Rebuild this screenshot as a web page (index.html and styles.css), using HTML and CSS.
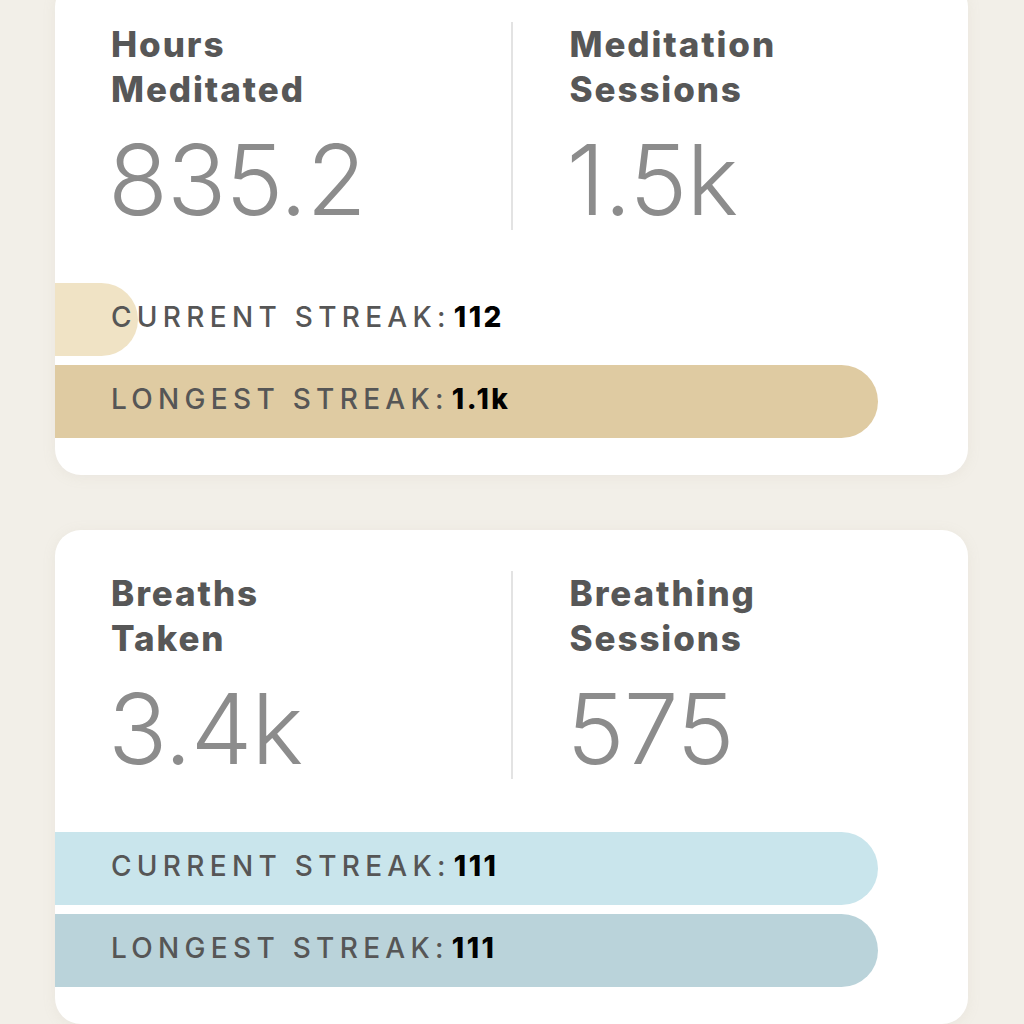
FILE: index.html
```html
<!DOCTYPE html>
<html>
<head>
<meta charset="utf-8">
<link rel="stylesheet" href="styles.css">
</head>
<body>
<div class="page">
  <section class="card card-first">
    <div class="stats">
      <div class="stat">
        <div class="stat-title">Hours<br>Meditated</div>
        <div class="stat-value">835.2</div>
      </div>
      <div class="divider"></div>
      <div class="stat stat-right">
        <div class="stat-title">Meditation<br>Sessions</div>
        <div class="stat-value">1.5k</div>
      </div>
    </div>
    <div class="bars">
      <div class="bar">
        <div class="bar-fill gold-light" style="width: 83px"></div>
        <span class="bar-label">CURRENT STREAK:</span><span class="bar-num">112</span>
      </div>
      <div class="bar">
        <div class="bar-fill gold-dark" style="width: 823px"></div>
        <span class="bar-label">LONGEST STREAK:</span><span class="bar-num">1.1k</span>
      </div>
    </div>
  </section>
  <section class="card">
    <div class="stats">
      <div class="stat">
        <div class="stat-title">Breaths<br>Taken</div>
        <div class="stat-value">3.4k</div>
      </div>
      <div class="divider"></div>
      <div class="stat stat-right">
        <div class="stat-title">Breathing<br>Sessions</div>
        <div class="stat-value">575</div>
      </div>
    </div>
    <div class="bars">
      <div class="bar">
        <div class="bar-fill blue-light" style="width: 823px"></div>
        <span class="bar-label">CURRENT STREAK:</span><span class="bar-num">111</span>
      </div>
      <div class="bar">
        <div class="bar-fill blue-dark" style="width: 823px"></div>
        <span class="bar-label">LONGEST STREAK:</span><span class="bar-num">111</span>
      </div>
    </div>
  </section>
</div>
</body>
</html>
```

FILE: styles.css
```css
html, body {
  margin: 0;
  padding: 0;
  background: #f2efe8;
  height: 1024px;
  overflow: hidden;
}
body {
  font-family: Inter, "Noto Sans", sans-serif;
}
.page {
  padding-left: 55px;
  width: 913px;
  margin-top: -19px;
  display: flex;
  flex-direction: column;
  gap: 55px;
}
.card {
  background: #ffffff;
  border-radius: 26px;
  padding: 41px 0 37px 0;
  box-shadow: 0 2px 14px rgba(170, 160, 140, 0.10);
}
.stats {
  display: grid;
  grid-template-columns: 1fr 2px 1fr;
  height: 203px;
}
.divider {
  background: #e3e3e3;
}
.stat {
  padding-left: 56px;
}
.stat-right {
  padding-left: 57px;
}
.stat-title {
  font-size: 35px;
  line-height: 45px;
  font-weight: 800;
  color: #575757;
  letter-spacing: 1.9px;
}
.stat-value {
  font-size: 98px;
  line-height: 100px;
  font-weight: 300;
  color: #8c8c8c;
  margin-top: 18px;
  margin-left: -3px;
  letter-spacing: -1px;
}
.bars {
  margin-top: 58px;
  display: flex;
  flex-direction: column;
  gap: 9px;
}
.bar {
  position: relative;
  height: 73px;
  box-sizing: border-box;
  padding-bottom: 6px;
  display: flex;
  align-items: center;
  padding-left: 56px;
}
.bar-fill {
  position: absolute;
  left: 0;
  top: 0;
  bottom: 0;
  border-radius: 0 37px 37px 0;
}
.gold-light { background: #f0e3c5; }
.gold-dark { background: #dfcba2; }
.blue-light { background: #c9e5ec; }
.blue-dark { background: #bad3da; }
.bar-label {
  position: relative;
  font-size: 28px;
  font-weight: 500;
  letter-spacing: 5.3px;
  color: #565656;
}
.bar-num {
  position: relative;
  font-size: 28px;
  font-weight: 800;
  letter-spacing: 2.5px;
  color: #000;
  margin-left: 3px;
}
```
